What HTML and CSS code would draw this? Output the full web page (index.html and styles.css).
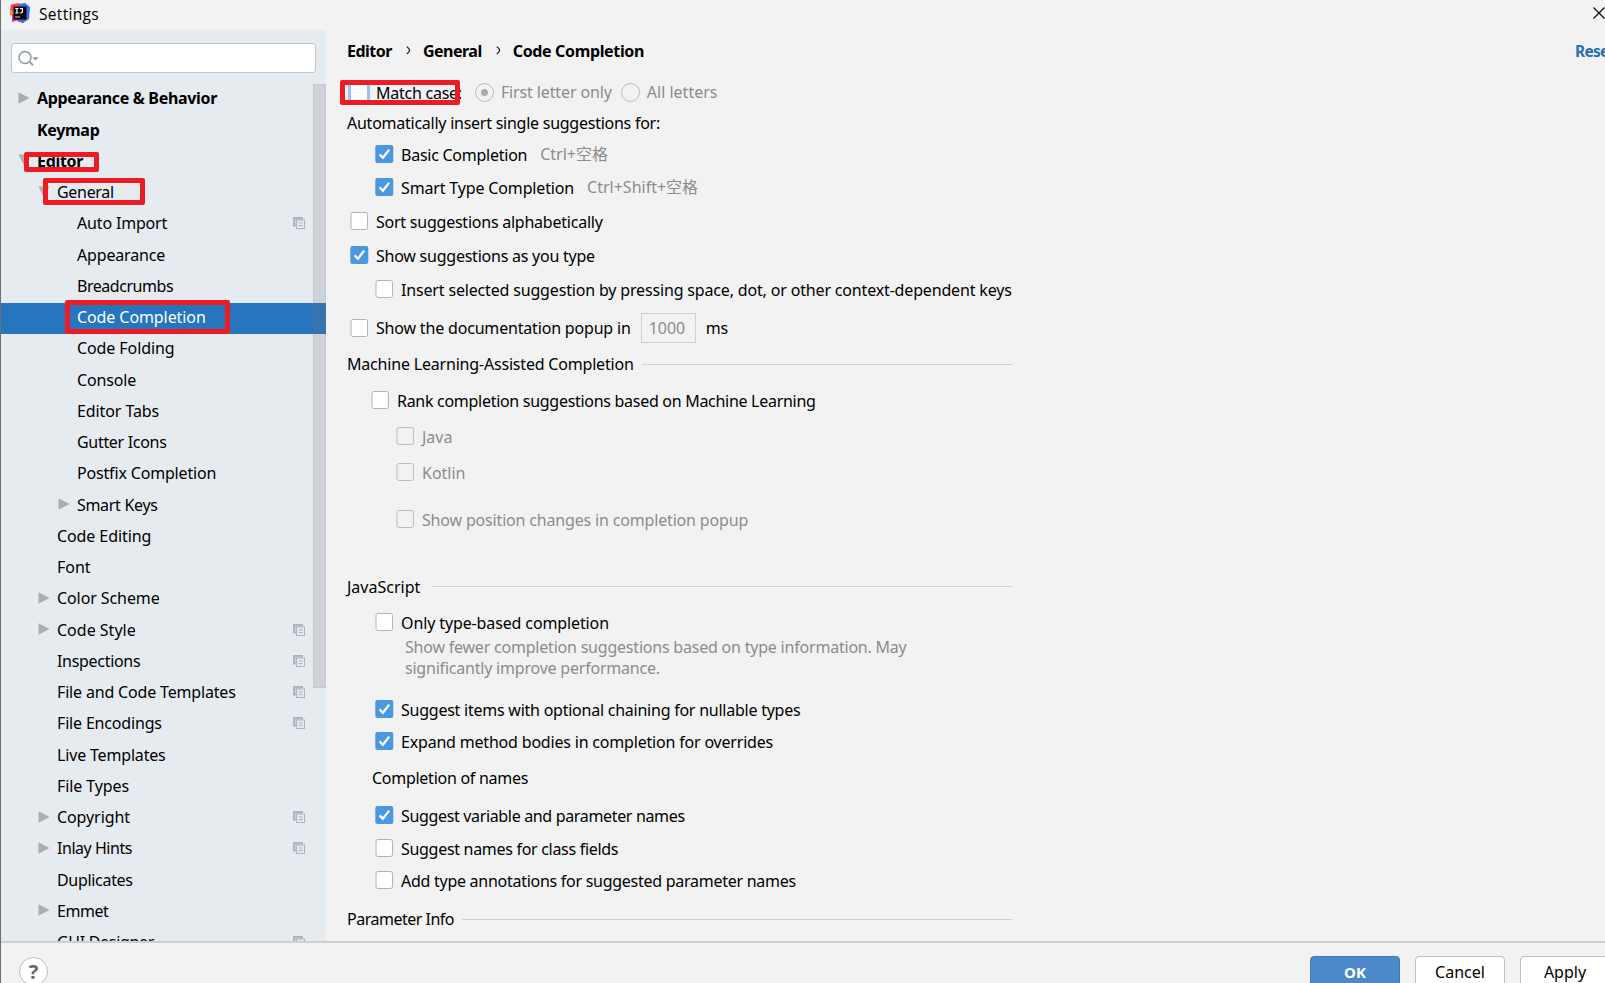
FILE: index.html
```html
<!DOCTYPE html>
<html lang="en">
<head>
<meta charset="utf-8">
<title>Settings</title>
<link rel="stylesheet" href="styles.css">
</head>
<body>
<svg class="defs" width="0" height="0">
  <defs>
    <symbol id="off" viewBox="0 0 20 20"><rect x="2" y="1.5" width="16.5" height="17" rx="2" fill="#fff" stroke="#b3b3b3"/></symbol>
    <symbol id="dis" viewBox="0 0 20 20"><rect x="2" y="1.5" width="16.5" height="17" rx="2" fill="none" stroke="#bdbdbd"/></symbol>
    <symbol id="on" viewBox="0 0 20 20"><rect x="1.3" y="1" width="18" height="18" rx="2.2" fill="#4a98e0"/><path d="M5.6 10.4 L8.9 13.7 L15.2 5.6" fill="none" stroke="#fff" stroke-width="2.3"/></symbol>
    <symbol id="right" viewBox="0 0 12 12"><path d="M0.5 0.3 L11.5 6 L0.5 11.7Z" fill="#adadad"/></symbol>
    <symbol id="down" viewBox="0 0 12 12"><path d="M0.5 0.5 L11.5 0.5 L6 11.5Z" fill="#adadad"/></symbol>
    <symbol id="copy" viewBox="0 0 12 12"><path d="M0 0H10V2.5H3V9.5H0Z" fill="#a9b5bf"/><path d="M1.8 1.8H8.2V3H3V8H1.8Z" fill="#c6cfd7"/><rect x="3.5" y="3" width="8" height="8.5" fill="#e6ebf0" stroke="#a9b5bf"/><path d="M5.5 6H9.8M5.5 8.6H9.8" stroke="#a9b5bf"/></symbol>
  </defs>
</svg>
<div class="window">
  <header class="titlebar">
    <svg class="logo" viewBox="0 0 20 20"><path d="M1 1.5 L9 0 L12 6 L6 12 L0 9Z" fill="#fb3f63"/><path d="M0 7 L5 9 L4 13 L0 12Z" fill="#fb8a25"/><path d="M2 11 L8 10 L9 17 L2 19Z" fill="#d9389f"/><path d="M9 1 L15 0 L20 4 L19 16 L13 20 L8 17 L12 10Z" fill="#2e74ee"/><path d="M8 16 L14 16 L13 20 L7 18Z" fill="#6a50dc"/><rect x="3.5" y="3.5" width="13" height="13" fill="#0b0508"/><path d="M5.2 5.5H8.6M6.9 5.5V10M5.2 10H8.6M10 5.5H13M12.4 5.5V8.6Q12.4 10 11 10H9.8" fill="none" stroke="#fff" stroke-width="1.2"/><path d="M5 14H10" stroke="#ddd" stroke-width="1"/></svg>
    <span class="title">Settings</span>
    <svg class="close" viewBox="0 0 12 12"><path d="M0.5 0.5L11.5 11.5M11.5 0.5L0.5 11.5" stroke="#111" stroke-width="1.3"/></svg>
  </header>
  <div class="body">
    <aside class="sidebar">
      <div class="search"><svg class="lens" viewBox="0 0 22 18"><circle cx="7" cy="7.5" r="6" fill="none" stroke="#8b959d" stroke-width="1.4"/><path d="M11.2 11.6L15 15.2" stroke="#8b959d" stroke-width="1.8"/><path d="M14.5 7.2H20.5L17.5 10.6Z" fill="#8b959d"/></svg></div>
      <ul class="tree">
        <li class="l0 b t3"><svg class="arrow"><use href="#right"/></svg><span>Appearance &amp; Behavior</span></li>
        <li class="l0 b t3"><i class="arrow"></i><span>Keymap</span></li>
        <li class="l0 b t3"><svg class="arrow"><use href="#down"/></svg><span>Editor</span><em class="mark mark-editor"></em></li>
        <li class="l1 t3"><svg class="arrow"><use href="#down"/></svg><span>General</span><em class="mark mark-general"></em></li>
        <li class="l2 t2"><i class="arrow"></i><span>Auto Import</span><svg class="copy"><use href="#copy"/></svg></li>
        <li class="l2 t2"><i class="arrow"></i><span>Appearance</span></li>
        <li class="l2 t4"><i class="arrow"></i><span>Breadcrumbs</span></li>
        <li class="l2 t1 selected"><i class="arrow"></i><span>Code Completion</span><em class="mark mark-completion"></em></li>
        <li class="l2 t1"><i class="arrow"></i><span>Code Folding</span></li>
        <li class="l2 t2"><i class="arrow"></i><span>Console</span></li>
        <li class="l2 t1"><i class="arrow"></i><span>Editor Tabs</span></li>
        <li class="l2 t3"><i class="arrow"></i><span>Gutter Icons</span></li>
        <li class="l2 t2"><i class="arrow"></i><span>Postfix Completion</span></li>
        <li class="l2 t3"><svg class="arrow"><use href="#right"/></svg><span>Smart Keys</span></li>
        <li class="l1 t1"><i class="arrow"></i><span>Code Editing</span></li>
        <li class="l1"><i class="arrow"></i><span>Font</span></li>
        <li class="l1 t1"><svg class="arrow"><use href="#right"/></svg><span>Color Scheme</span></li>
        <li class="l1"><svg class="arrow"><use href="#right"/></svg><span>Code Style</span><svg class="copy"><use href="#copy"/></svg></li>
        <li class="l1 t3"><i class="arrow"></i><span>Inspections</span><svg class="copy"><use href="#copy"/></svg></li>
        <li class="l1 t2"><i class="arrow"></i><span>File and Code Templates</span><svg class="copy"><use href="#copy"/></svg></li>
        <li class="l1 t2"><i class="arrow"></i><span>File Encodings</span><svg class="copy"><use href="#copy"/></svg></li>
        <li class="l1 t2"><i class="arrow"></i><span>Live Templates</span></li>
        <li class="l1 t1"><i class="arrow"></i><span>File Types</span></li>
        <li class="l1 t1"><svg class="arrow"><use href="#right"/></svg><span>Copyright</span><svg class="copy"><use href="#copy"/></svg></li>
        <li class="l1 t4"><svg class="arrow"><use href="#right"/></svg><span>Inlay Hints</span><svg class="copy"><use href="#copy"/></svg></li>
        <li class="l1 t3"><i class="arrow"></i><span>Duplicates</span></li>
        <li class="l1 t4"><svg class="arrow"><use href="#right"/></svg><span>Emmet</span></li>
        <li class="l1 t3"><i class="arrow"></i><span>GUI Designer</span><svg class="copy"><use href="#copy"/></svg></li>
      </ul>
      <div class="scrollbar"></div>
    </aside>
    <main class="panel">
      <div class="crumbs"><span>Editor</span><svg class="sep" viewBox="0 0 5 9"><path d="M0.8 0.8Q3.6 2.6 3.6 4.2Q3.6 6 0.8 8" fill="none" stroke="#222" stroke-width="1.3"/></svg><span>General</span><svg class="sep" viewBox="0 0 5 9"><path d="M0.8 0.8Q3.6 2.6 3.6 4.2Q3.6 6 0.8 8" fill="none" stroke="#222" stroke-width="1.3"/></svg><span class="current">Code Completion</span><a class="reset">Reset</a></div>
      <div class="row match"><span class="focusbox"></span><span class="label">Match case:</span><span class="radio checked"></span><span class="radiotext first">First letter only</span><span class="radio"></span><span class="radiotext">All letters</span><em class="mark mark-match"></em></div>
      <div class="row auto"><span class="text">Automatically insert single suggestions for:</span></div>
      <div class="row basic in1"><svg class="box"><use href="#on"/></svg><span class="label">Basic Completion</span><span class="key">Ctrl+空格</span></div>
      <div class="row smart in1"><svg class="box"><use href="#on"/></svg><span class="label">Smart Type Completion</span><span class="key">Ctrl+Shift+空格</span></div>
      <div class="row sort"><svg class="box"><use href="#off"/></svg><span class="label">Sort suggestions alphabetically</span></div>
      <div class="row show"><svg class="box"><use href="#on"/></svg><span class="label">Show suggestions as you type</span></div>
      <div class="row insert in1"><svg class="box"><use href="#off"/></svg><span class="label">Insert selected suggestion by pressing space, dot, or other context-dependent keys</span></div>
      <div class="row popup"><svg class="box"><use href="#off"/></svg><span class="label">Show the documentation popup in</span><span class="field">1000</span><span class="unit">ms</span></div>
      <div class="row ml"><span class="text">Machine Learning-Assisted Completion</span><span class="line"></span></div>
      <div class="row rank"><svg class="box"><use href="#off"/></svg><span class="label">Rank completion suggestions based on Machine Learning</span></div>
      <div class="row java in2"><svg class="box"><use href="#dis"/></svg><span class="label">Java</span></div>
      <div class="row kotlin in2"><svg class="box"><use href="#dis"/></svg><span class="label">Kotlin</span></div>
      <div class="row position in2"><svg class="box"><use href="#dis"/></svg><span class="label">Show position changes in completion popup</span></div>
      <div class="row js"><span class="text">JavaScript</span><span class="line"></span></div>
      <div class="row only in1"><svg class="box"><use href="#off"/></svg><span class="label">Only type-based completion</span></div>
      <p class="hint">Show fewer completion suggestions based on type information. May<br>significantly improve performance.</p>
      <div class="row items in1"><svg class="box"><use href="#on"/></svg><span class="label">Suggest items with optional chaining for nullable types</span></div>
      <div class="row expand in1"><svg class="box"><use href="#on"/></svg><span class="label">Expand method bodies in completion for overrides</span></div>
      <div class="row names"><span class="text">Completion of names</span></div>
      <div class="row variable in1"><svg class="box"><use href="#on"/></svg><span class="label">Suggest variable and parameter names</span></div>
      <div class="row fields in1"><svg class="box"><use href="#off"/></svg><span class="label">Suggest names for class fields</span></div>
      <div class="row annot in1"><svg class="box"><use href="#off"/></svg><span class="label">Add type annotations for suggested parameter names</span></div>
      <div class="row param"><span class="text">Parameter Info</span><span class="line"></span></div>
    </main>
  </div>
  <footer class="footer">
    <button class="help">?</button>
    <div class="buttons"><button class="btn ok">OK</button><button class="btn">Cancel</button><button class="btn">Apply</button></div>
  </footer>
</div>
</body>
</html>
```
FILE: styles.css
```css
* { box-sizing: border-box; }
body { margin: 0; overflow: hidden; background: #f2f2f2; color: #000; font: 16px/24px "Noto Sans", "Noto Sans CJK SC", sans-serif; }
.defs { position: absolute; }
.window { width: 1605px; height: 983px; overflow: hidden; display: flex; flex-direction: column; border-left: 1px solid #6e6e72; }
span, a { white-space: pre; flex: none; }
svg { flex: none; display: block; }

.titlebar { height: 30px; flex: none; display: flex; align-items: center; padding: 0 0 4px 9px; }
.logo { width: 20px; height: 20px; }
.title { margin-left: 9px; font-family: "Open Sans", sans-serif; font-size: 15.5px; letter-spacing: .3px; padding-top: 1px; }
.close { width: 12px; height: 12px; margin-left: auto; margin-right: 0; flex: none; }

.body { height: 911px; flex: none; display: flex; overflow: hidden; }
.sidebar { width: 325px; flex: none; background: #e6ebf0; position: relative; padding-top: 13px; }
.search { width: 305px; height: 30px; margin-left: 10px; border: 1px solid #c4c4c4; border-radius: 3px; background: #fff; padding: 6px 0 0 6px; }
.lens { width: 22px; height: 18px; }
.tree { list-style: none; margin: 11.25px 0 0; padding: 0; }
.tree li { height: 31.25px; display: flex; align-items: center; position: relative; padding-right: 21px; padding-bottom: 3px; }
.tree .arrow { width: 12px; height: 12px; margin-right: 7px; margin-bottom: 1px; flex: none; }
.tree .l0 { padding-left: 17px; }
.tree .l1 { padding-left: 37px; }
.tree .l2 { padding-left: 57px; }
.b { font-weight: 700; }
.t1 { letter-spacing: -.09px; }
.t2 { letter-spacing: -.17px; }
.t3 { letter-spacing: -.31px; }
.t4 { letter-spacing: -.46px; }
.tree .selected { background: #2675bf; color: #fff; }
.copy { width: 12px; height: 12px; margin-left: auto; }
.scrollbar { position: absolute; left: 312px; top: 54px; width: 13px; height: 604px; background: rgba(115,115,115,.2); border: 1px solid rgba(115,115,115,.1); }

.mark { position: absolute; border: 5px solid #ed1c24; border-radius: 2px; }
.mark-editor { left: 23px; top: 5px; width: 75px; height: 20px; }
.mark-general { left: 42px; top: 0; width: 102px; height: 27px; }
.mark-completion { left: 64px; top: -3px; width: 165px; height: 34px; }
.mark-match { left: -7px; top: 0; width: 120px; height: 25px; }

.panel { flex: 1; padding: 9px 0 0 21px; display: flex; flex-direction: column; }
.crumbs { height: 24px; flex: none; display: flex; align-items: center; font-weight: 700; letter-spacing: -.5px; }
.current { letter-spacing: -.35px; }
.sep { width: 5px; height: 9px; margin: 0 12px 2px 14px; }
.reset { margin-left: auto; width: 30px; overflow: hidden; color: #2470b3; font-size: 15.5px; letter-spacing: -.7px; }
.row { height: 24px; width: 665px; flex: none; display: flex; align-items: center; position: relative; }
.box { width: 20px; height: 20px; margin: 0 7px 0 2px; }
.label { padding-top: 2px; }
.in1 { padding-left: 25px; }
.in2 { padding-left: 46px; color: #8c8c8c; }
.match { margin-top: 17px; }
.match .label { letter-spacing: -.25px; }
.focusbox { width: 22px; height: 16px; background: #fff; border: solid #97c3f3; border-width: 0 3px; margin: 0 6px 0 1px; }
.radio { width: 19px; height: 19px; border: 1px solid #bcbcbc; border-radius: 50%; margin-left: 13px; display: grid; place-items: center; }
.radiotext + .radio { margin-left: 9px; }
.checked::after { content: ""; width: 7px; height: 7px; border-radius: 50%; background: #ababab; }
.radiotext { margin-left: 7px; color: #8c8c8c; }
.first { letter-spacing: -.12px; }
.auto { margin-top: 7px; letter-spacing: -.25px; }
.basic { margin-top: 7px; }
.basic .label { letter-spacing: -.25px; padding-top: 1px; }
.key { margin-left: 13px; color: #8c8c8c; }
.smart { margin-top: 9px; }
.smart .label { letter-spacing: -.15px; }
.sort, .show, .insert { margin-top: 10px; }
.sort .label, .show .label { letter-spacing: -.235px; }
.insert .label { letter-spacing: -.165px; padding-top: 1px; }
.popup { margin-top: 11px; height: 31px; }
.popup .label { letter-spacing: -.18px; padding-top: 1px; }
.field { width: 55px; height: 30px; border: 1px solid #cfcfcf; margin-left: 10px; padding: 2px 0 0 7px; color: #8c8c8c; }
.unit { margin-left: 10px; }
.line { flex: 1; height: 1px; background: #cfcfcf; margin-left: 8px; }
.js .line { margin-left: 12px; }
.ml { margin-top: 9px; letter-spacing: -.19px; }
.ml .text { padding-bottom: 1px; }
.rank { margin-top: 12px; padding-left: 21px; letter-spacing: -.29px; }
.java, .kotlin { margin-top: 12px; }
.position { margin-top: 23px; letter-spacing: -.17px; }
.position .label { padding-top: 1px; }
.js { margin-top: 43px; }
.js .text { padding-top: 1px; }
.only { margin-top: 12px; letter-spacing: -.12px; }
.hint { margin: 3px 0 0 58px; line-height: 21px; color: #8c8c8c; height: 42px; flex: none; letter-spacing: -.21px; }
.items { margin-top: 18px; letter-spacing: -.24px; }
.items .label { padding-top: 1px; }
.expand { margin-top: 8px; letter-spacing: -.19px; }
.names { margin-top: 13px; padding-left: 25px; letter-spacing: -.27px; }
.variable { margin-top: 13px; letter-spacing: -.34px; }
.fields { margin-top: 9px; letter-spacing: -.3px; }
.fields .label { padding-top: 1px; }
.annot { margin-top: 8px; letter-spacing: -.27px; }
.param { margin-top: 15px; letter-spacing: -.5px; }

.footer { height: 42px; flex: none; border-top: 2px solid #cfcfcf; display: flex; justify-content: space-between; align-items: flex-start; padding-left: 18px; }
.help { width: 29px; height: 29px; margin-top: 14px; padding: 0; border: 1px solid #bdbdbd; border-radius: 50%; background: #fff; color: #666; font: 700 20px/27px "Noto Sans", sans-serif; }
.buttons { display: flex; gap: 15px; margin: 13px -5px 0 0; }
.btn { width: 90px; height: 34px; border: 1px solid #c0c0c0; border-radius: 4px; background: #fff; color: #000; font: 16px/30px "Noto Sans", sans-serif; padding: 0 0 2px; }
.ok { background: #4d89c9; border-color: #4379b3; color: #fff; font-weight: 700; font-size: 15px; }
```
